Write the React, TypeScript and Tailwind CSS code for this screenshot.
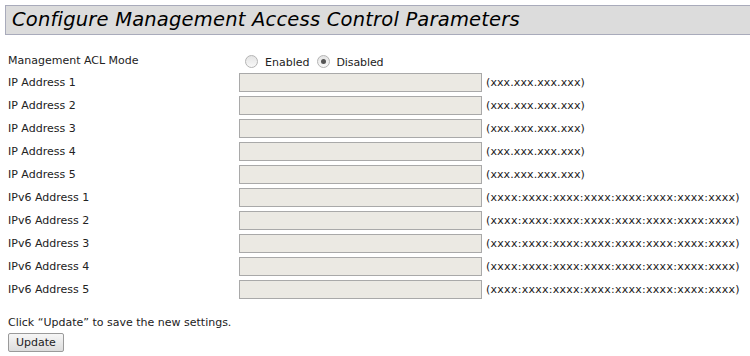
import React from "react";

const rows = [
  { label: "IP Address 1", hint: "(xxx.xxx.xxx.xxx)", v6: false },
  { label: "IP Address 2", hint: "(xxx.xxx.xxx.xxx)", v6: false },
  { label: "IP Address 3", hint: "(xxx.xxx.xxx.xxx)", v6: false },
  { label: "IP Address 4", hint: "(xxx.xxx.xxx.xxx)", v6: false },
  { label: "IP Address 5", hint: "(xxx.xxx.xxx.xxx)", v6: false },
  { label: "IPv6 Address 1", hint: "(xxxx:xxxx:xxxx:xxxx:xxxx:xxxx:xxxx:xxxx)", v6: true },
  { label: "IPv6 Address 2", hint: "(xxxx:xxxx:xxxx:xxxx:xxxx:xxxx:xxxx:xxxx)", v6: true },
  { label: "IPv6 Address 3", hint: "(xxxx:xxxx:xxxx:xxxx:xxxx:xxxx:xxxx:xxxx)", v6: true },
  { label: "IPv6 Address 4", hint: "(xxxx:xxxx:xxxx:xxxx:xxxx:xxxx:xxxx:xxxx)", v6: true },
  { label: "IPv6 Address 5", hint: "(xxxx:xxxx:xxxx:xxxx:xxxx:xxxx:xxxx:xxxx)", v6: true },
];

function Radio({ checked }: { checked?: boolean }) {
  return (
    <span className="mb-[4px] inline-flex h-[13px] w-[13px] shrink-0 items-center justify-center rounded-full border border-[#b4b4b4] bg-gradient-to-b from-[#e4e4e4] to-[#f8f8f8]">
      {checked && <span className="h-[5px] w-[5px] rounded-full bg-[#555]" />}
    </span>
  );
}

export default function App() {
  return (
    <div className="h-[356px] w-[750px] overflow-hidden bg-white text-[11px] text-[#222] [font-family:'DejaVu_Sans',Verdana,sans-serif]">
      {/* header bar */}
      <div className="ml-[5px] mt-[5px] flex h-[30px] items-center border border-r-0 border-[#a9abbb] bg-[#dcdcdc] pl-[6px]">
        <h1 className="text-[19.5px] italic tracking-[0.2px] text-black">Configure Management Access Control Parameters</h1>
      </div>

      <div className="px-[8px] pt-[17px]">
        <div className="grid grid-cols-[231px_243px_1fr] items-center">
          <div className="h-[18px] leading-[18px]">Management ACL Mode</div>
          <div className="col-span-2 flex h-[18px] items-center pl-[6px] pt-[4px]">
            <Radio />
            <span className="ml-[7px]">Enabled</span>
            <span className="ml-[8px] flex items-center"><Radio checked /></span>
            <span className="ml-[6px] tracking-[-0.1px]">Disabled</span>
          </div>
        </div>

        <div className="mt-[3px] flex flex-col gap-[4px]">
          {rows.map((r) => (
            <div key={r.label} className="grid grid-cols-[231px_243px_1fr] items-center">
              <div className="pt-[1px]">{r.label}</div>
              <div className="h-[19px] border border-[#a9a9a9] bg-[#ebe9e3]" />
              <div className={r.v6 ? "pl-[4px] pt-[1px] whitespace-nowrap tracking-[0.27px]" : "pl-[4px] pt-[1px] whitespace-nowrap tracking-[0.1px]"}>
                {r.hint}
              </div>
            </div>
          ))}
        </div>

        <div className="mt-[16px]">Click “Update” to save the new settings.</div>
        <button className="mt-[1px] h-[19px] rounded-[2px] border border-[#9a9a9a] bg-gradient-to-b from-[#f6f6f6] to-[#dddddd] px-[7px] text-[11px] leading-[17px] text-[#222]">
          Update
        </button>
      </div>
    </div>
  );
}
